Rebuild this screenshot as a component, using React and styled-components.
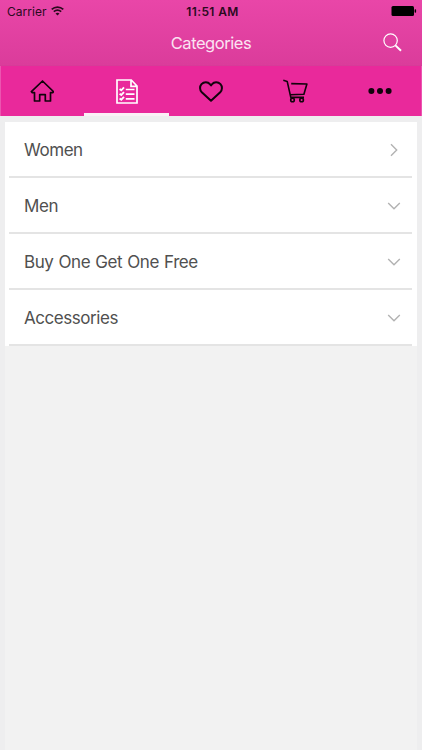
import React, { useState } from 'react';
import styled, { createGlobalStyle } from 'styled-components';

const GlobalStyle = createGlobalStyle`
  * {
    box-sizing: border-box;
  }

  body {
    margin: 0;
    background-color: #eeeeef;
    font-family: Inter, "Liberation Sans", sans-serif;
  }
`;

const Screen = styled.div`
  display: flex;
  flex-direction: column;
  width: 422px;
  height: 750px;
  overflow: hidden;
  background-color: #eeeeef;
`;

const Header = styled.header`
  height: 66px;
  background: linear-gradient(#e946a8, #db3c9b);
  border-bottom: 1px solid #d63c98;
`;

const StatusBar = styled.div`
  display: grid;
  grid-template-columns: 1fr auto 1fr;
  align-items: center;
  height: 22px;
  padding: 0 5px 0 7px;
  color: #2b0a1e;
  font-size: 12px;
`;

const Carrier = styled.div`
  display: flex;
  align-items: center;
  gap: 4px;
  letter-spacing: 0.05px;
`;

const Time = styled.div`
  padding-left: 1px;
  font-weight: 600;
  letter-spacing: 0.38px;
`;

const Battery = styled.svg`
  justify-self: end;
`;

const TitleBar = styled.div`
  display: grid;
  grid-template-columns: 1fr auto 1fr;
  align-items: center;
  height: 42px;
  padding: 0 20px;
`;

const Title = styled.h1`
  grid-column: 2;
  margin: 0;
  color: #fbe3f2;
  font-size: 16.5px;
  font-weight: 400;
  letter-spacing: -0.45px;
`;

const SearchButton = styled.button`
  justify-self: end;
  display: flex;
  padding: 0 0 2px;
  border: 0;
  background: none;
`;

const Tabs = styled.nav`
  display: grid;
  grid-template-columns: repeat(5, 1fr);
  height: 50px;
  background-color: #e9299b;
  box-shadow: inset 1px 0 #ec55b0, inset -1px 0 #ec55b0;
`;

const Tab = styled.button`
  display: flex;
  align-items: center;
  justify-content: center;
  padding: 3px 0 0;
  border: 0;
  border-bottom: 3px solid ${(props) => (props.$active ? '#fbf0f6' : 'transparent')};
  background: none;
  color: ${(props) => (props.$active ? '#fff' : '#12030c')};
`;

const Content = styled.main`
  flex: 1;
  margin: 6px 5px 0;
  background-color: #f2f2f2;
`;

const List = styled.ul`
  margin: 0;
  padding: 0 5px 0 4px;
  list-style: none;
  background-color: #fff;
`;

const Row = styled.li`
  display: flex;
  align-items: center;
  justify-content: space-between;
  height: 56px;
  padding: 2px 11px 0 15px;
  border-bottom: 2px solid #e4e4e4;
  color: #505050;
  font-size: 17px;
  letter-spacing: -0.44px;
  word-spacing: 0.8px;
  cursor: pointer;
`;

const Arrow = styled.svg`
  fill: none;
  stroke: #b2b2b2;
  stroke-width: 1.4;
  transform: ${(props) => (props.$right ? 'rotate(-90deg)' : 'none')};
`;

const WifiIcon = () => (
  <svg width="13" height="10" viewBox="0 0 13 10" fill="none" stroke="#2b0a1e" strokeWidth="1.7">
    <path d="M.7 3.4C4 .3 9 .3 12.3 3.4" />
    <path d="M2.8 5.7C5 3.7 8 3.7 10.2 5.7" />
    <path d="M4.5 7.4Q6.5 5.9 8.5 7.4L6.5 9.6Z" fill="#2b0a1e" stroke="none" />
  </svg>
);

const HomeIcon = () => (
  <svg width="24" height="22" viewBox="-.5 0 24 22" fill="none" stroke="currentColor" strokeWidth="1.7" strokeLinejoin="round">
    <path d="M12 1L.9 11.7L1.8 12.6H4V21H9.2V14.6H14.8V21H20V12.6H22.2L23.1 11.7Z" />
  </svg>
);

const ListIcon = () => (
  <svg width="22" height="25" viewBox="0 0 22 25" fill="none" stroke="currentColor" strokeWidth="1.7">
    <path d="M1 1H15.3L21 7V24H1ZM15 1V7.3H21" />
    <path d="M9.8 10.5H18.5M9.8 15.2H18.5M9.8 19.9H18.5" />
    <path d="M3.6 10L5.3 11.3L8 8.4M3.6 14.7L5.3 16L8 13.1M3.6 19.4L5.3 20.7L8 17.8" strokeWidth="1.9" />
  </svg>
);

const HeartIcon = () => (
  <svg width="24" height="21" viewBox="0 0 24 21" fill="none" stroke="currentColor" strokeWidth="2" strokeLinejoin="round">
    <path d="M12 19.8L2.8 11.3C.6 9.1.5 5.3 2.5 3.1C5 .4 8.9.6 10.9 3.1L12 4.4L13.1 3.1C15.1.6 19 .4 21.5 3.1C23.5 5.3 23.4 9.1 21.2 11.3Z" />
  </svg>
);

const CartIcon = () => (
  <svg width="25" height="24" viewBox="0 0 25 24" fill="none" stroke="currentColor" strokeWidth="1.6" strokeLinejoin="round">
    <path d="M.3 1.3L4.2 2.4L7.8 18.4H21" />
    <path d="M8.2 4.6L23.9 5L20.9 15.2L7.2 15.8" />
    <circle cx="9.5" cy="20.9" r="1.8" />
    <circle cx="18.6" cy="20.9" r="1.8" />
  </svg>
);

const MoreIcon = () => (
  <svg width="24" height="6" viewBox="0 0 24 6" fill="currentColor">
    <circle cx="3.4" cy="3" r="3" />
    <circle cx="12" cy="3" r="3" />
    <circle cx="20.6" cy="3" r="3" />
  </svg>
);

const tabs = [
  { id: 'home', icon: <HomeIcon /> },
  { id: 'categories', icon: <ListIcon /> },
  { id: 'wishlist', icon: <HeartIcon /> },
  { id: 'cart', icon: <CartIcon /> },
  { id: 'more', icon: <MoreIcon /> },
];

const categories = [
  { name: 'Women', link: true },
  { name: 'Men' },
  { name: 'Buy One Get One Free' },
  { name: 'Accessories' },
];

const App = () => {
  const [active, setActive] = useState('categories');

  return (
    <>
      <GlobalStyle />
      <Screen>
        <Header>
          <StatusBar>
            <Carrier>Carrier <WifiIcon /></Carrier>
            <Time>11:51 AM</Time>
            <Battery width="26" height="10" viewBox="0 0 26 10">
              <rect x="0.5" width="22.5" height="10" rx="1.5" />
              <rect x="23.6" y="3.3" width="1.5" height="3.4" rx="0.7" />
            </Battery>
          </StatusBar>
          <TitleBar>
            <Title>Categories</Title>
            <SearchButton aria-label="Search">
              <svg width="19" height="19" viewBox="0 0 19 19" fill="none" stroke="#fff">
                <circle cx="7.6" cy="7.6" r="6.7" strokeWidth="1.2" />
                <path d="M12.4 12.4L18 17.8" strokeWidth="2" />
              </svg>
            </SearchButton>
          </TitleBar>
        </Header>
        <Tabs>
          {tabs.map((tab) => (
            <Tab key={tab.id} aria-label={tab.id} $active={active === tab.id} onClick={() => setActive(tab.id)}>
              {tab.icon}
            </Tab>
          ))}
        </Tabs>
        <Content>
          <List>
            {categories.map((item) => (
              <Row key={item.name}>
                {item.name}
                <Arrow $right={item.link} width="14" height="8" viewBox="0 0 14 8">
                  <path d="M1.2 1L7 6.7L12.8 1" />
                </Arrow>
              </Row>
            ))}
          </List>
        </Content>
      </Screen>
    </>
  );
};

export default App;
